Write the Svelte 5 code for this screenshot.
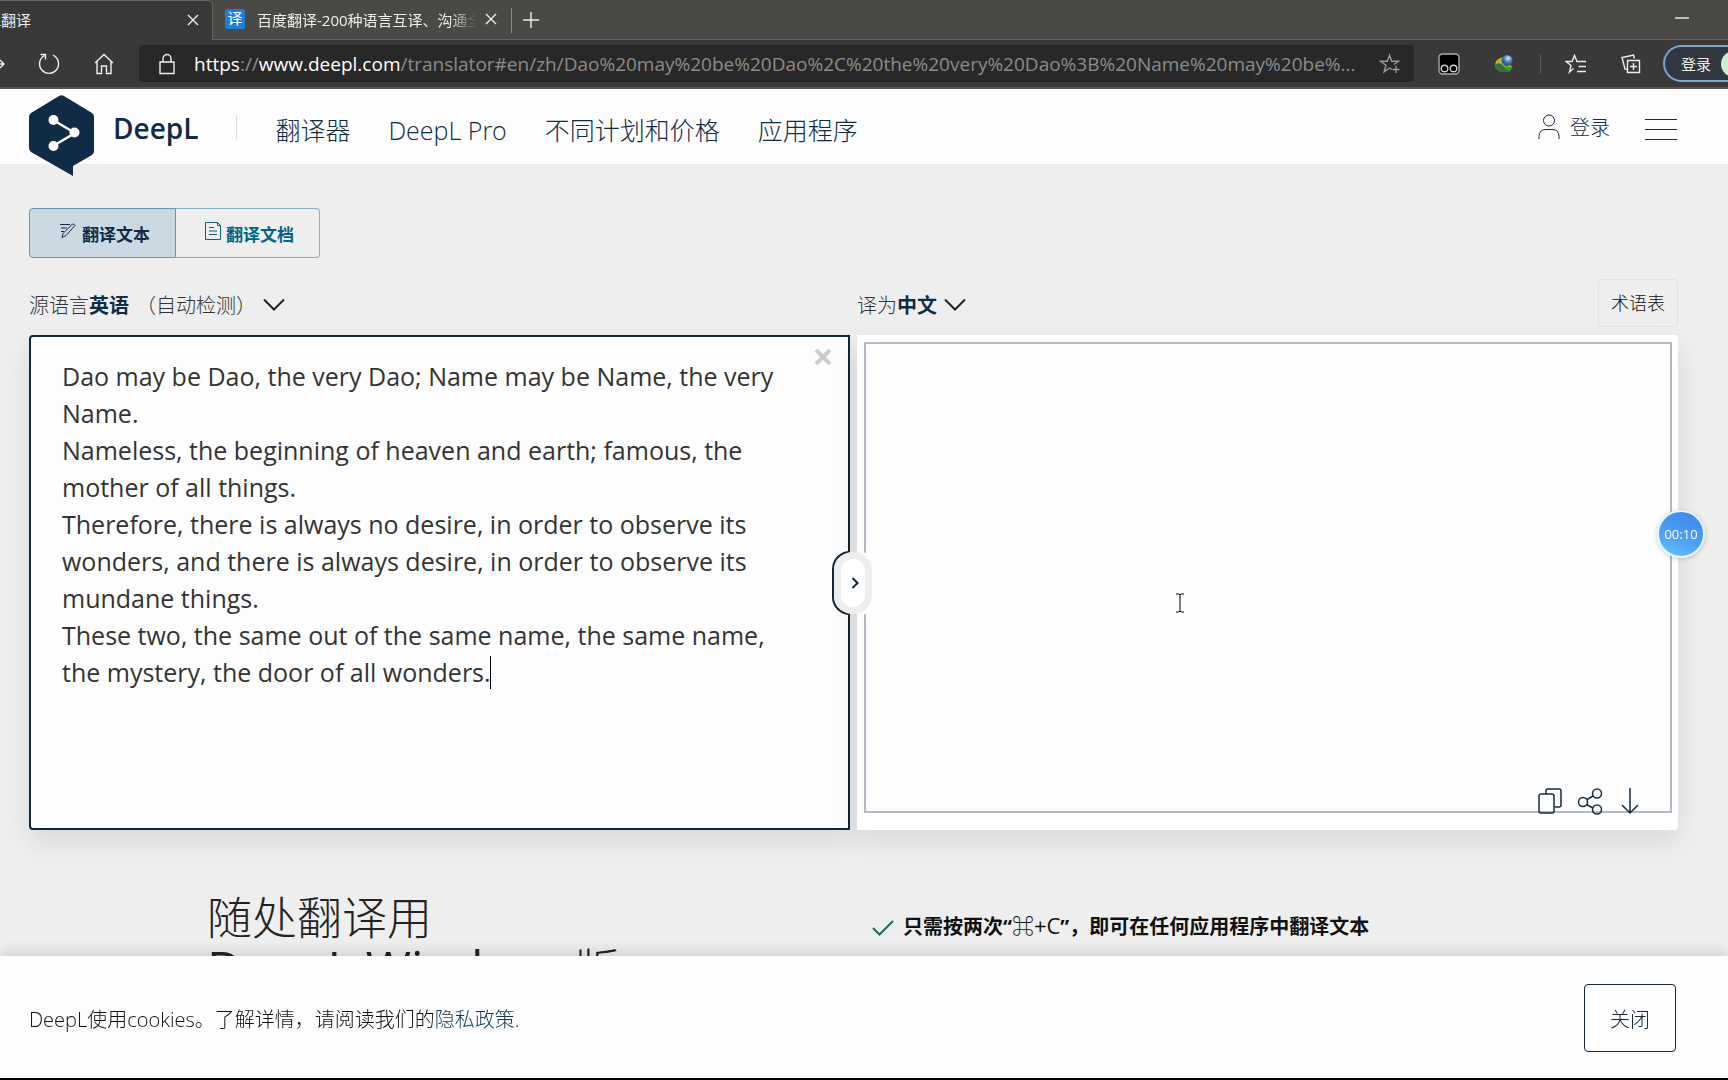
<script>
	const address =
		'/translator#en/zh/Dao%20may%20be%20Dao%2C%20the%20very%20Dao%3B%20Name%20may%20be%...';
	const nav = ['翻译器', 'DeepL Pro', '不同计划和价格', '应用程序'];

	let source = $state(
		[
			'Dao may be Dao, the very Dao; Name may be Name, the very Name.',
			'Nameless, the beginning of heaven and earth; famous, the mother of all things.',
			'Therefore, there is always no desire, in order to observe its wonders, and there is always desire, in order to observe its mundane things.',
			'These two, the same out of the same name, the same name, the mystery, the door of all wonders.'
		].join('\n')
	);
	let target = $state('');
	let mode = $state('text');
	let cookies = $state(true);
</script>

{#snippet cross()}
	<svg width="12" height="12" viewBox="0 0 12 12"><path d="M1 1l10 10M11 1L1 11" /></svg>
{/snippet}

{#snippet chevron()}
	<svg class="chevron" width="22" height="14" viewBox="0 0 22 14"><path d="M1 1.500l10 10 10-10" /></svg>
{/snippet}

<div class="browser">
	<div class="tabs">
		<div class="tab active">
			<span class="title">DeepL翻译</span>
			<button aria-label="关闭标签页">{@render cross()}</button>
		</div>
		<div class="tab">
			<span class="favicon">译</span>
			<span class="title">百度翻译-200种语言互译、沟通全世界！</span>
			<button aria-label="关闭标签页">{@render cross()}</button>
		</div>
		<button class="new" aria-label="新建标签页">
			<svg width="18" height="18" viewBox="0 0 18 18"><path d="M9 1v16M1 9h16" /></svg>
		</button>
		<button class="minimize" aria-label="最小化">
			<svg width="14" height="2" viewBox="0 0 14 2"><path d="M0 1h14" /></svg>
		</button>
	</div>
	<div class="toolbar">
		<button class="forward" aria-label="前进">
			<svg width="5" height="14" viewBox="0 0 5 14"><path d="M0 7h4M0 3l4 4-4 4" /></svg>
		</button>
		<button class="reload" aria-label="刷新">
			<svg width="24" height="24" viewBox="0 0 24 24"><path d="M7.500 3.500A9.500 9.500 0 1 0 16 3.200M3.500 2.500h5v5" /></svg>
		</button>
		<button class="home" aria-label="主页">
			<svg width="22" height="22" viewBox="0 0 22 22"><path d="M2 10l9-8.500L20 10M4 8.500V20.500h4.500V13h5v7.500H18V8.500" /></svg>
		</button>
		<div class="address">
			<svg width="18" height="22" viewBox="0 0 18 22"><path d="M2 9h14v11.500H2zM5 9V5.500a4 4 0 0 1 8 0V9" /></svg>
			<span class="url"><b>https</b>://<b>www.deepl.com</b>{address}</span>
			<button class="star" aria-label="收藏">
				<svg width="22" height="22" viewBox="0 0 22 22"><path d="M13 16.500l-2.500-1.500-5.500 4 2-6.700-5.500-4.100h6.800L10.500 2l2.200 6.200h6.800l-4.500 3.300M17 13v7M13.500 16.500h7" /></svg>
			</button>
		</div>
		<button class="ext" aria-label="Tampermonkey">
			<svg width="22" height="22" viewBox="0 0 22 22"><rect x="1" y="1" width="20" height="20" rx="3.500" fill="#000" stroke="#aaa" /><circle cx="6.500" cy="15.500" r="3.300" stroke="#ccc" /><circle cx="15.500" cy="15.500" r="3.300" stroke="#ccc" /></svg>
		</button>
		<button class="ext" aria-label="IDM">
			<svg class="idm" width="22" height="20" viewBox="0 0 22 20">
				<defs>
					<radialGradient id="globe" cx=".6" cy=".3"><stop offset="0" stop-color="#d8eefa" /><stop offset=".5" stop-color="#6d9fc6" /><stop offset="1" stop-color="#295f9e" /></radialGradient>
				</defs>
				<path d="M2 11Q2 5 10 3l3 6 6 3-3 5q-10 3-14-6z" fill="#c6b229" />
				<path d="M1 12q3-4 7-2l8 7q-11 4-15-5z" fill="#32723b" />
				<circle cx="14" cy="6.500" r="5.500" fill="url(#globe)" />
				<path d="M9 9q5 5 11 4l-4 5q-3-5-7-9z" fill="#14b51d" />
			</svg>
		</button>
		<i></i>
		<button class="ext" aria-label="收藏夹">
			<svg width="22" height="20" viewBox="0 0 22 20"><path d="M8.500 14.500L4.500 18 6 11.500 1 7.500h6L9.500 1.500l2.500 6h9M13.500 12.500H21M12 17.500h9" /></svg>
		</button>
		<button class="ext" aria-label="集锦">
			<svg width="20" height="20" viewBox="0 0 20 20"><path d="M6.500 6.500h12v12h-12zM12.500 9v7M9 12.500h7M6 15.500l-2-.5L1 3.500 12.500 1l1 3.500" /></svg>
		</button>
		<button class="profile">登录<span></span></button>
	</div>
</div>

<header>
	<a class="brand" href="#home">
		<svg width="65" height="82" viewBox="0 0 65 82">
			<path fill="#0f2b46" d="M2 19L30 2q2.500-1.500 5 0L63 19q2 1.500 2 4v34q0 2.500-2 4L44 72v10L2 58q-2-1.500-2-4V23q0-2.500 2-4z" />
			<path stroke="#fff" stroke-width="2.500" d="M24 26l22 13-22 13" />
			<g fill="#fff"><circle cx="24.500" cy="26" r="5" /><circle cx="45.500" cy="38.500" r="5" /><circle cx="24.500" cy="52" r="5" /></g>
		</svg>
		<strong>DeepL</strong>
	</a>
	<nav>
		{#each nav as item}
			<a href="#{item}">{item}</a>
		{/each}
	</nav>
	<a class="login" href="#login">
		<svg width="22" height="26" viewBox="0 0 22 26"><circle cx="11" cy="6.500" r="5.500" /><path d="M1 25v-2.500q0-7 7-7h6q7 0 7 7V25" /></svg>
		登录
	</a>
	<button class="menu" aria-label="菜单">
		<svg width="32" height="22" viewBox="0 0 32 22"><path d="M0 1.500h32M0 11.500h32M0 21.500h32" /></svg>
	</button>
</header>

<main>
	<div class="modes">
		<button class:selected={mode === 'text'} onclick={() => (mode = 'text')}>
			<svg width="18" height="18" viewBox="0 0 18 18"><path d="M3 15.500l1-4L13.500 2q1.500-.5 2.500 1.500L7 13.500zM1 2.500h10M2 6h6M2 9.500h3" /></svg>
			翻译文本
		</button>
		<button class:selected={mode === 'docs'} onclick={() => (mode = 'docs')}>
			<svg width="16" height="20" viewBox="0 0 16 20"><path d="M.5 1.500h12l3 3v14H.5zM12.500 1.500v3h3M4 6.500h5M4 10h8M4 13.500h8" /></svg>
			翻译文档
		</button>
	</div>

	<div class="translator">
		<section>
			<div class="bar">
				<button class="lang"><span>源语言<b>英语</b></span> <span>（自动检测）</span>{@render chevron()}</button>
			</div>
			<div class="box source">
				<textarea aria-label="源文本" spellcheck="false" bind:value={source}></textarea>
				<span class="caret"></span>
				<button class="clear" aria-label="清除" onclick={() => (source = '')}>
					<svg width="18" height="18" viewBox="0 0 18 18"><path d="M2 2l14 14M16 2L2 16" /></svg>
				</button>
			</div>
		</section>
		<section>
			<div class="bar">
				<button class="lang"><span>译为<b>中文</b></span>{@render chevron()}</button>
				<button class="glossary">术语表</button>
			</div>
			<div class="box target">
				<textarea aria-label="译文" bind:value={target}></textarea>
				<div class="actions">
					<button aria-label="复制">
						<svg width="26" height="28" viewBox="0 0 26 28"><path d="M9 7V4q0-2 2-2h11q2 0 2 2v14q0 2-2 2h-4M4 7h11q2 0 2 2v15q0 2-2 2H4q-2 0-2-2V9q0-2 2-2z" /></svg>
					</button>
					<button aria-label="分享">
						<svg width="26" height="28" viewBox="0 0 26 28"><circle cx="6" cy="15" r="4.500" /><circle cx="20" cy="6.500" r="4.500" /><circle cx="20" cy="22.500" r="4.500" /><path d="M10 12.500l6-3.500M9.500 17.500L16 21" /></svg>
					</button>
					<button aria-label="下载">
						<svg width="26" height="28" viewBox="0 0 26 28"><path d="M13 1v25M5 18l8 8 8-8" /></svg>
					</button>
				</div>
			</div>
		</section>
		<button class="swap" aria-label="交换语言">
			<svg width="8" height="14" viewBox="0 0 8 14"><path d="M1.500 2l5 5-5 5" /></svg>
		</button>
	</div>

	<div class="promo">
		<h2>随处翻译用<br /><span>DeepL Windows</span>版</h2>
		<p>
			<svg width="22" height="16" viewBox="0 0 22 16"><path d="M1 8l6.500 6.500L21 1" /></svg>
			<span>只需按两次“<kbd>⌘+C</kbd>”，即可在任何应用程序中翻译文本</span>
		</p>
	</div>
</main>

{#if cookies}
	<footer>
		<p>DeepL使用cookies。了解详情，请阅读我们的<a href="#privacy">隐私政策</a>.</p>
		<button onclick={() => (cookies = false)}>关闭</button>
	</footer>
{/if}

<div class="timer">00:10</div>
<svg class="pointer" width="10" height="20" viewBox="0 0 10 20"><path d="M1 1h3l1 1 1-1h3M5 2v16M1 19h3l1-1 1 1h3" /></svg>

<style>
	:global(body) {
		margin: 0;
		background: #eee;
		overflow: hidden;
		color: #333;
		font: 300 20px 'Open Sans', 'Noto Sans CJK SC', sans-serif;
	}
	svg {
		flex: none;
		fill: none;
		stroke: currentColor;
	}
	button {
		padding: 0;
		border: 0;
		background: none;
		color: inherit;
		font: inherit;
		display: flex;
		align-items: center;
		justify-content: center;
		flex: none;
		white-space: nowrap;
	}
	a {
		color: inherit;
		text-decoration: none;
	}

	/* browser window */
	.browser {
		color: #eee;
		background: #393939;
		border-bottom: 2px solid #555;
		font-weight: 400;
	}
	.browser svg {
		stroke-width: 1.4;
	}
	.tabs {
		display: flex;
		height: 40px;
		background: #4b4945;
		box-shadow: inset 0 -1px #666;
		font-size: 15px;
	}
	.tab {
		display: flex;
		align-items: center;
		width: 299px;
		box-sizing: border-box;
		padding: 0 15px 2px 12px;
		position: relative;
	}
	.tab::after {
		content: '';
		position: absolute;
		right: 0;
		top: 8px;
		height: 25px;
		border-right: 1px solid #888;
	}
	.tab .title {
		flex: 1;
		white-space: nowrap;
		overflow: hidden;
		margin: 0 9px 0 12px;
		mask-image: linear-gradient(to right, #000 88%, transparent);
	}
	.tab.active {
		width: 213px;
		padding: 0 13px 2px 0;
		justify-content: space-between;
		background: #393939;
		border: 1px solid #666;
		border-width: 1px 1px 0 0;
		border-radius: 0 5px 0 0;
	}
	.tab.active::after {
		display: none;
	}
	.tab.active .title {
		flex: none;
		width: 31px;
		margin: 0;
		display: flex;
		justify-content: flex-end;
		mask-image: none;
	}
	.favicon {
		width: 20px;
		height: 20px;
		border-radius: 2px;
		background: #1c7fd6;
		color: #fff;
		line-height: 19px;
		text-align: center;
	}
	.new {
		margin-left: 10px;
	}
	.minimize {
		margin: 0 39px 4px auto;
	}
	.toolbar {
		display: flex;
		align-items: center;
		height: 47px;
		overflow: hidden;
	}
	.reload {
		margin-left: 32px;
	}
	.home {
		margin-left: 32px;
	}
	.address {
		display: flex;
		align-items: center;
		flex: 1;
		min-width: 0;
		height: 37px;
		margin: 0 24px;
		padding: 0 13px 0 19px;
		border-radius: 4px;
		background: #282828;
	}
	.url {
		flex: 1;
		margin: 0 10px 0 18px;
		overflow: hidden;
		white-space: nowrap;
		text-overflow: ellipsis;
		color: #8c8c8c;
		font-size: 19px;
	}
	.url b {
		color: #fff;
		font-weight: 400;
	}
	.star {
		color: #999;
	}
	.ext {
		width: 22px;
		margin-right: 33px;
	}
	.browser .idm {
		stroke: none;
	}
	.toolbar i {
		height: 20px;
		margin-right: 24px;
		margin-left: -8px;
		border-left: 1px solid #5a5a5a;
	}
	.ext:nth-last-child(2) {
		margin-right: 21px;
	}
	.profile {
		width: 65px;
		height: 37px;
		box-sizing: border-box;
		border: 2px solid #7ba4cb;
		border-right: 0;
		border-radius: 19px 0 0 19px;
		overflow: hidden;
		justify-content: flex-start;
		padding-left: 16px;
		background: #323840;
		font-size: 15px;
	}
	.profile span {
		flex: none;
		width: 26px;
		height: 26px;
		margin-left: 10px;
		border-radius: 50%;
		background: #cdebcf;
	}

	/* site header */
	header {
		display: flex;
		align-items: center;
		height: 75px;
		padding: 0 51px 0 29px;
		background: #fdfdfd;
		color: #0f2b46;
	}
	.brand {
		display: flex;
		height: 66px;
		padding-right: 39px;
		position: relative;
	}
	.brand::after {
		content: '';
		position: absolute;
		right: 0;
		top: 21px;
		height: 25px;
		border-right: 1px solid #ddd;
	}
	.brand svg {
		stroke: none;
	}
	.brand strong {
		margin-left: 19px;
		font: 600 28px/68px 'Open Sans', sans-serif;
	}
	nav {
		display: flex;
		flex: 1;
		gap: 38px;
		margin-left: 38px;
		padding-top: 6px;
		font-size: 25px;
		line-height: 34px;
		white-space: nowrap;
	}
	.login {
		display: flex;
		align-items: center;
		gap: 10px;
	}
	.menu {
		margin: 4px 0 0 35px;
	}

	/* translator */
	main {
		padding: 44px 50px 0 29px;
	}
	.modes {
		display: flex;
	}
	.modes button {
		width: 144px;
		height: 50px;
		box-sizing: border-box;
		gap: 5px;
		padding: 0 0 0 4px;
		border: 1px solid #8cb0c4;
		border-left: 0;
		border-radius: 0 4px 4px 0;
		color: #006484;
		font-size: 17px;
		font-weight: 700;
	}
	.modes button:first-child {
		width: 147px;
		border: 1px solid #6797b0;
		border-radius: 4px 0 0 4px;
	}
	.modes .selected {
		background: #cad9e2;
		color: #0f2b46;
	}
	.modes svg {
		margin-bottom: 4px;
	}
	.translator {
		display: grid;
		grid-template-columns: 1fr 1fr;
		gap: 7px;
		margin-top: 21px;
		position: relative;
	}
	.bar {
		display: flex;
		justify-content: space-between;
		height: 48px;
		margin-bottom: 8px;
	}
	.lang {
		gap: 7px;
		padding-top: 2px;
	}
	.lang b {
		color: #0f2b46;
		font-weight: 700;
	}
	.chevron {
		margin-top: 2px;
		stroke: #222;
		stroke-width: 2;
	}
	.glossary {
		width: 80px;
		box-sizing: border-box;
		padding-bottom: 2px;
		border: 1px solid #e2e2e2;
		border-radius: 4px;
		color: #111;
		font-size: 18px;
	}
	.box {
		display: flex;
		height: 495px;
		box-sizing: border-box;
		position: relative;
		background: #fdfdfd;
		box-shadow: 0 12px 28px rgba(0, 0, 0, 0.09);
	}
	.source {
		border: 2px solid #142633;
		border-radius: 4px 0 0 4px;
	}
	.target {
		padding: 7px 6px 17px 7px;
		border-radius: 0 4px 4px 0;
		background: #fff;
	}
	textarea {
		flex: 1;
		box-sizing: border-box;
		margin: 0;
		padding: 21px 60px 20px 31px;
		border: 0;
		outline: 0;
		resize: none;
		background: none;
		color: #333;
		font: 400 25px/37px 'Open Sans', sans-serif;
	}
	.target textarea {
		border: 2px solid #b4bac5;
		background: #fdfdfd;
	}
	.caret {
		position: absolute;
		left: 459px;
		top: 319px;
		height: 33px;
		border-left: 1px solid #000;
	}
	.clear {
		position: absolute;
		right: 16px;
		top: 11px;
		color: #ccc;
	}
	.clear svg {
		stroke-width: 4;
	}
	.actions {
		display: flex;
		gap: 14px;
		position: absolute;
		right: 35px;
		bottom: 15px;
		color: #142d3d;
	}
	.actions svg {
		stroke-width: 1.5;
	}
	.swap {
		position: absolute;
		left: 50%;
		top: 273px;
		width: 38px;
		height: 62px;
		margin-left: -20px;
		box-sizing: border-box;
		border: 7px solid #eee;
		border-radius: 19px;
		background: #fff;
		color: #142633;
		padding-left: 4px;
		z-index: 1;
	}
	.swap svg {
		stroke-width: 2;
	}
	/* outline that continues the source box around the button */
	.source::after {
		content: '';
		position: absolute;
		right: -2px;
		top: 214px;
		width: 18px;
		height: 64px;
		box-sizing: border-box;
		border: 2px solid #142633;
		border-right: 0;
		border-radius: 18px 0 0 18px;
		background: #fdfdfd;
	}
	.target::before {
		content: '';
		position: absolute;
		left: 0;
		top: 216px;
		width: 18px;
		height: 65px;
		background: #fdfdfd;
		border-radius: 0 18px 18px 0;
	}

	/* promo */
	.promo {
		display: grid;
		grid-template-columns: 665px 1fr;
		padding: 63px 0 0 178px;
	}
	h2 {
		margin: 0;
		color: #222;
		font-size: 45px;
		line-height: 50px;
		font-weight: 300;
	}
	h2 span {
		font-size: 49px;
		font-weight: 400;
	}
	.promo p {
		display: flex;
		align-items: center;
		align-self: start;
		gap: 9px;
		margin: 18px 0 0;
		color: #111;
		font-weight: 700;
	}
	.promo svg {
		margin-top: 4px;
		stroke: #1b6a66;
		stroke-width: 2;
	}
	kbd {
		font: 400 22px/24px 'Open Sans', 'Noto Sans CJK SC', sans-serif;
	}

	footer {
		display: flex;
		align-items: center;
		justify-content: space-between;
		position: fixed;
		left: 0;
		right: 0;
		bottom: 0;
		z-index: 2;
		padding: 28px 52px 26px 29px;
		border-bottom: 2px solid #000;
		background: #fdfdfd;
		box-shadow: 0 0 16px rgba(0, 0, 0, 0.2);
	}
	footer p {
		margin: 0;
		color: #111;
	}
	footer a {
		color: #0f3b5a;
	}
	footer button {
		width: 92px;
		height: 68px;
		box-sizing: border-box;
		border: 1px solid #142633;
		border-radius: 4px;
		color: #142633;
	}

	/* recorder bubble and mouse pointer */
	.timer {
		position: fixed;
		right: 23px;
		top: 510px;
		width: 44px;
		height: 44px;
		border: 2px solid #e2f7ff;
		border-radius: 50%;
		background: linear-gradient(200deg, #3f83e6, #4ca2f5 60%, #6bc4f8);
		box-shadow: 0 1px 5px rgba(0, 0, 0, 0.2);
		color: #fff;
		font: 400 13px/44px 'Open Sans', sans-serif;
		text-align: center;
	}
	.pointer {
		position: fixed;
		left: 1175px;
		top: 593px;
		stroke: #000;
	}
</style>
